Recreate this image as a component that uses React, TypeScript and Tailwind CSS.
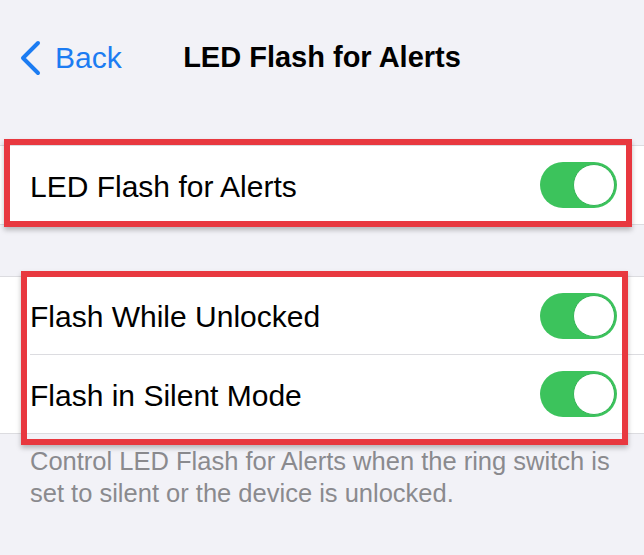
import type { ReactNode } from "react";

const Toggle = () => (
	<div className="flex h-[46px] w-[77px] items-center justify-end rounded-full bg-[#3cc35c] p-[2px]">
		<div className="h-[42px] w-[42px] rounded-full border border-[#34b556] bg-white" />
	</div>
);

const Row = ({ label, divider }: { label: string; divider?: boolean }) => (
	<div className="flex h-[78px] items-center pl-[30px]">
		<div
			className={`flex h-full flex-1 items-center justify-between pr-[27px] ${
				divider ? "border-b border-[#dcdce0]" : ""
			}`}
		>
			<span className="pt-[2px] text-[30px] text-black">{label}</span>
			<Toggle />
		</div>
	</div>
);

// red annotation frame drawn over a settings group
const Marker = ({ className }: { className: string }) => (
	<div
		className={`pointer-events-none absolute border-[6px] border-[#e8383f] shadow-[0_3px_5px_rgba(0,0,0,0.25)] ${className}`}
	/>
);

const Group = ({ children }: { children: ReactNode }) => (
	<div className="border-y border-[#dcdce0] bg-white">{children}</div>
);

export default function App() {
	return (
		<div
			className="h-[555px] w-[644px] overflow-hidden bg-[#f2f2f7]"
			style={{ fontFamily: '"Liberation Sans", Arial, sans-serif' }}
		>
			<header className="grid h-[115px] grid-cols-[1fr_auto_1fr] items-center">
				<div className="flex items-center pl-[19px] text-[#1c7cf2]">
					<svg width="22" height="36" viewBox="0 0 22 36" fill="none">
						<path
							d="M19 3 L4 18 L19 33"
							stroke="currentColor"
							strokeWidth="4"
							strokeLinecap="round"
							strokeLinejoin="round"
						/>
					</svg>
					<span className="ml-[14px] text-[30px]">Back</span>
				</div>
				<h1 className="text-[29px] font-bold text-black">LED Flash for Alerts</h1>
				<div />
			</header>

			<div className="relative mt-[30px]">
				<Group>
					<Row label="LED Flash for Alerts" />
				</Group>
				<Marker className="-top-[6px] left-[4px] right-[12px] -bottom-[2px]" />
			</div>

			<div className="relative mt-[51px]">
				<Group>
					<Row label="Flash While Unlocked" divider />
					<Row label="Flash in Silent Mode" />
				</Group>
				<Marker className="-top-[5px] left-[21px] right-[16px] -bottom-[11px]" />
			</div>

			<p className="mt-[11px] pl-[30px] pr-[29px] text-[25.5px] leading-[32px] text-[#8a8a8e]">
				Control LED Flash for Alerts when the ring switch is set to silent or the device is unlocked.
			</p>
		</div>
	);
}
